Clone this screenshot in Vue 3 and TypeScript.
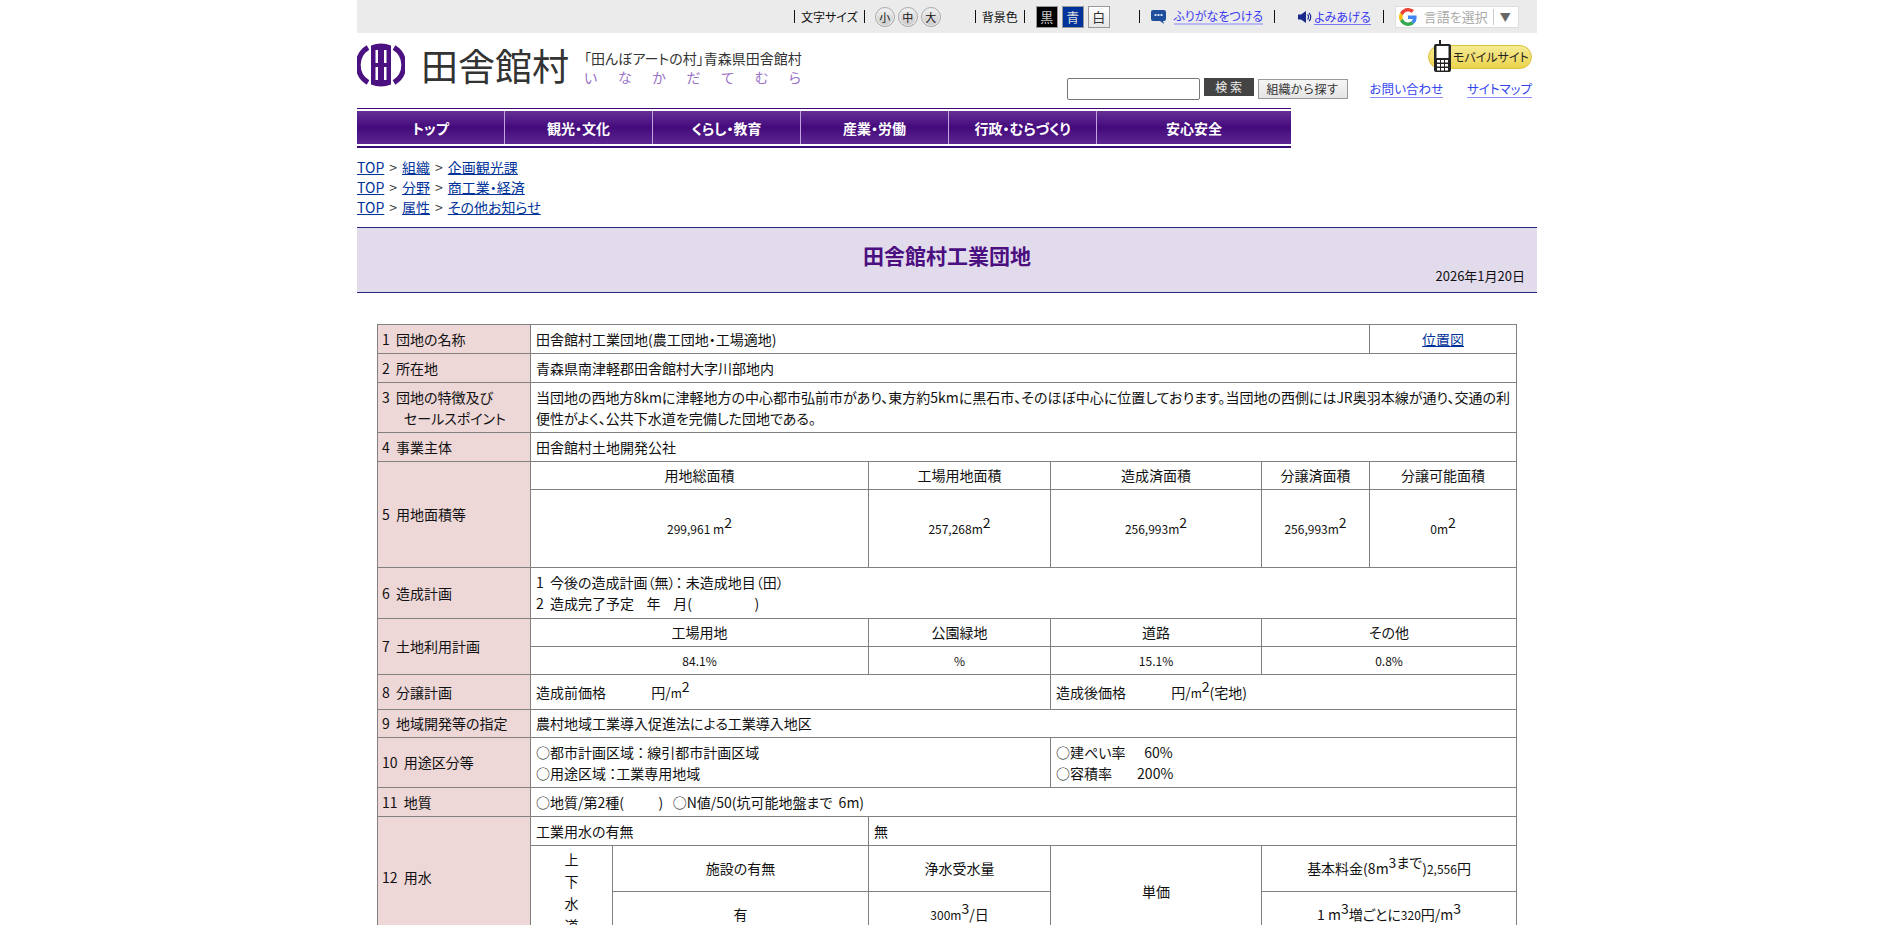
<script setup lang="ts">
const navItems = ["トップ", "観光・文化", "くらし・教育", "産業・労働", "行政・むらづくり", "安心安全"]

const crumbs = [
	["組織", "企画観光課"],
	["分野", "商工業・経済"],
	["属性", "その他お知らせ"],
]

const kana = ["い", "な", "か", "だ", "て", "む", "ら"]
</script>

<template>
	<div class="page">
		<!-- 上部バー -->
		<div class="topbar">
			<span class="sep"></span>
			<span class="bar-label">文字サイズ</span>
			<span class="sep"></span>
			<span class="round first">小</span>
			<span class="round">中</span>
			<span class="round">大</span>
			<span class="sep bg-sep"></span>
			<span class="bar-label">背景色</span>
			<span class="sep"></span>
			<span class="swatch black">黒</span>
			<span class="swatch blue">青</span>
			<span class="swatch white">白</span>
			<span class="sep wide"></span>
			<svg class="bubble" width="15" height="16" viewBox="0 0 15 16">
				<path d="M2 1h11a2 2 0 0 1 2 2v7a2 2 0 0 1-2 2h-1l1 3-4-3H2a2 2 0 0 1-2-2V3a2 2 0 0 1 2-2z" fill="#1f4f9c" />
				<rect x="3.5" y="5" width="2" height="2" fill="#cfe0f5" />
				<rect x="6.5" y="5" width="2" height="2" fill="#cfe0f5" />
				<rect x="9.5" y="5" width="2" height="2" fill="#cfe0f5" />
			</svg>
			<a class="bar-link furigana">ふりがなをつける</a>
			<span class="sep after-link"></span>
			<svg class="speaker" width="14" height="14" viewBox="0 0 14 14">
				<path d="M0 4.5h3L8 1v12L3 9.5H0z" fill="#1a2a8c" />
				<path d="M9.5 4.5a3.5 3.5 0 0 1 0 5M11 2.8a6 6 0 0 1 0 8.4" fill="none" stroke="#1a2a8c" stroke-width="1.2" />
			</svg>
			<a class="bar-link yomi">よみあげる</a>
			<span class="sep after-yomi"></span>
			<div class="translate">
				<svg width="18" height="18" viewBox="0 0 48 48">
					<path fill="#ea4335" d="M24 9.5c3.5 0 6.700 1.300 9.100 3.500l6.800-6.800C35.800 2.400 30.300 0 24 0 14.600 0 6.500 5.400 2.600 13.200l7.900 6.200C12.400 13.600 17.700 9.500 24 9.500z" />
					<path fill="#4285f4" d="M47 24.500c0-1.600-.2-3.100-.4-4.500H24v9h12.900c-.6 3-2.200 5.500-4.700 7.200l7.700 6C44.400 38 47 31.800 47 24.500z" />
					<path fill="#fbbc05" d="M10.500 28.600c-.5-1.400-.8-3-.8-4.600s.3-3.200.8-4.600l-7.900-6.200C1 16.500 0 20.100 0 24s1 7.500 2.600 10.800l7.900-6.200z" />
					<path fill="#34a853" d="M24 48c6.500 0 11.900-2.100 15.900-5.800l-7.700-6c-2.200 1.400-5 2.300-8.200 2.300-6.300 0-11.600-4.100-13.500-9.900l-7.900 6.200C6.500 42.600 14.600 48 24 48z" />
				</svg>
				<span class="translate-text">言語を選択</span>
				<span class="translate-line"></span>
				<span class="translate-arrow">▼</span>
			</div>
		</div>

		<!-- ヘッダー -->
		<header class="header">
			<div class="brand">
				<svg class="emblem" width="48" height="44" viewBox="0 0 48 44">
					<path d="M11 4.500A20.500 20.500 0 0 0 11 39.500" fill="none" stroke="#4b1181" stroke-width="5" />
					<path d="M37 4.500A20.500 20.500 0 0 1 37 39.500" fill="none" stroke="#4b1181" stroke-width="5" />
					<path d="M14 2.500Q24 -1.500 34 2.500V41.500Q24 45.500 14 41.500Z" fill="#4b1181" />
					<rect x="18.500" y="7" width="2.500" height="13" fill="#fff" />
					<rect x="27" y="7" width="2.500" height="13" fill="#fff" />
					<rect x="18.500" y="24" width="2.500" height="13" fill="#fff" />
					<rect x="27" y="24" width="2.500" height="13" fill="#fff" />
				</svg>
				<span class="brand-name">田舎館村</span>
				<div class="tagline">
					<div class="tag-main">「田んぼアートの村」青森県田舎館村</div>
					<div class="tag-kana">
						<span v-for="k in kana" :key="k">{{ k }}</span>
					</div>
				</div>
			</div>
			<div class="header-right">
				<div class="mobile">
					<svg class="phone" width="17" height="32" viewBox="0 0 17 32">
						<rect x="5" y="0" width="2" height="4" fill="#222" />
						<rect x="0" y="4" width="17" height="28" rx="2" fill="#222" />
						<rect x="2.500" y="6" width="12" height="12" fill="#fff" />
						<g fill="#fff">
							<rect x="3" y="20" width="3" height="2.500" /><rect x="7" y="20" width="3" height="2.500" /><rect x="11" y="20" width="3" height="2.500" />
							<rect x="3" y="24" width="3" height="2.500" /><rect x="7" y="24" width="3" height="2.500" /><rect x="11" y="24" width="3" height="2.500" />
							<rect x="3" y="28" width="3" height="2.500" /><rect x="7" y="28" width="3" height="2.500" /><rect x="11" y="28" width="3" height="2.500" />
						</g>
					</svg>
					<span>モバイルサイト</span>
				</div>
				<div class="search-row">
					<input class="search-input" type="text" />
					<button class="search-btn">検 索</button>
					<button class="org-btn">組織から探す</button>
					<a class="head-link contact">お問い合わせ</a>
					<a class="head-link sitemap">サイトマップ</a>
				</div>
			</div>
		</header>

		<!-- グローバルナビ -->
		<nav class="nav">
			<a v-for="item in navItems" :key="item" class="nav-item">{{ item }}</a>
		</nav>

		<!-- パンくず -->
		<div class="crumbs">
			<div v-for="c in crumbs" :key="c[0]" class="crumb">
				<a>TOP</a><span class="gt">&gt;</span><a>{{ c[0] }}</a><span class="gt">&gt;</span><a>{{ c[1] }}</a>
			</div>
		</div>

		<!-- タイトル -->
		<div class="title-band">
			<h1>田舎館村工業団地</h1>
			<p>2026年1月20日</p>
		</div>

		<!-- 工業団地の表 -->
		<table class="info">
			<colgroup>
				<col class="c1" /><col class="c2" /><col class="c3" /><col class="c4" /><col class="c5" /><col class="c6" /><col class="c7" />
			</colgroup>
			<tbody>
				<tr class="r29">
					<th>1&nbsp; 団地の名称</th>
					<td colspan="5">田舎館村工業団地(農工団地・工場適地)</td>
					<td class="ctr"><a class="link">位置図</a></td>
				</tr>
				<tr class="r29">
					<th>2&nbsp; 所在地</th>
					<td colspan="6">青森県南津軽郡田舎館村大字川部地内</td>
				</tr>
				<tr class="r50">
					<th>3&nbsp; 団地の特徴及び<br />&nbsp;&nbsp;&nbsp;&nbsp;&nbsp;&nbsp; セールスポイント</th>
					<td colspan="6">当団地の西地方8kmに津軽地方の中心都市弘前市があり、東方約5kmに黒石市、そのほぼ中心に位置しております。当団地の西側にはJR奥羽本線が通り、交通の利<br />便性がよく、公共下水道を完備した団地である。</td>
				</tr>
				<tr class="r29">
					<th>4&nbsp; 事業主体</th>
					<td colspan="6">田舎館村土地開発公社</td>
				</tr>
				<tr class="r28">
					<th rowspan="2">5&nbsp; 用地面積等</th>
					<td colspan="2" class="ctr">用地総面積</td>
					<td class="ctr">工場用地面積</td>
					<td class="ctr">造成済面積</td>
					<td class="ctr">分譲済面積</td>
					<td class="ctr">分譲可能面積</td>
				</tr>
				<tr class="r78">
					<td colspan="2" class="ctr"><span class="n">299,961 m</span><sup>2</sup></td>
					<td class="ctr"><span class="n">257,268m</span><sup>2</sup></td>
					<td class="ctr"><span class="n">256,993m</span><sup>2</sup></td>
					<td class="ctr"><span class="n">256,993m</span><sup>2</sup></td>
					<td class="ctr"><span class="n">0m</span><sup>2</sup></td>
				</tr>
				<tr class="r51">
					<th>6&nbsp; 造成計画</th>
					<td colspan="6">1&nbsp; 今後の造成計画（無）： 未造成地目（田）<br />2&nbsp; 造成完了予定 &nbsp; &nbsp;年 &nbsp; &nbsp;月( &nbsp; &nbsp; &nbsp; &nbsp; &nbsp; &nbsp; &nbsp; &nbsp; &nbsp; &nbsp;)</td>
				</tr>
				<tr class="r28">
					<th rowspan="2">7&nbsp; 土地利用計画</th>
					<td colspan="2" class="ctr">工場用地</td>
					<td class="ctr">公園緑地</td>
					<td class="ctr">道路</td>
					<td colspan="2" class="ctr">その他</td>
				</tr>
				<tr class="r28">
					<td colspan="2" class="ctr"><span class="n">84.1%</span></td>
					<td class="ctr"><span class="n">%</span></td>
					<td class="ctr"><span class="n">15.1%</span></td>
					<td colspan="2" class="ctr"><span class="n">0.8%</span></td>
				</tr>
				<tr class="r35">
					<th>8&nbsp; 分譲計画</th>
					<td colspan="3">造成前価格 <span class="gap-a"></span>円/<span class="n">m</span><sup>2</sup></td>
					<td colspan="3">造成後価格 <span class="gap-b"></span>円/<span class="n">m</span><sup>2</sup>(宅地)</td>
				</tr>
				<tr class="r28">
					<th>9&nbsp; 地域開発等の指定</th>
					<td colspan="6">農村地域工業導入促進法による工業導入地区</td>
				</tr>
				<tr class="r50">
					<th>10&nbsp; 用途区分等</th>
					<td colspan="3">○都市計画区域 ： 線引都市計画区域<br />○用途区域 ：工業専用地域</td>
					<td colspan="3">○建ぺい率 &nbsp; &nbsp; &nbsp;60%<br />○容積率 &nbsp; &nbsp; &nbsp; &nbsp;200%</td>
				</tr>
				<tr class="r29">
					<th>11&nbsp; 地質</th>
					<td colspan="6">○地質/第2種( &nbsp; &nbsp; &nbsp; &nbsp; &nbsp; ) &nbsp; ○N値/50(坑可能地盤まで &nbsp;6m)</td>
				</tr>
				<tr class="r29">
					<th rowspan="3">12&nbsp; 用水</th>
					<td colspan="2">工業用水の有無</td>
					<td colspan="4">無</td>
				</tr>
				<tr class="r46">
					<td rowspan="2" class="ctr tall">上<br />下<br />水<br />道</td>
					<td class="ctr">施設の有無</td>
					<td class="ctr">浄水受水量</td>
					<td rowspan="2" class="ctr">単価</td>
					<td colspan="2" class="ctr">基本料金(8m<sup>3まで</sup>)<span class="n">2,556</span>円</td>
				</tr>
				<tr class="r46">
					<td class="ctr">有</td>
					<td class="ctr"><span class="n">300m</span><sup>3</sup>/日</td>
					<td colspan="2" class="ctr">1 m<sup>3</sup>増ごとに<span class="n">320</span>円/m<sup>3</sup></td>
				</tr>
			</tbody>
		</table>
	</div>
</template>

<style>
html,
body {
	margin: 0;
	overflow: hidden;
	background: #fff;
}
</style>

<style scoped>
.page {
	width: 1180px;
	height: 925px;
	margin-left: 357px;
	overflow: hidden;
	font-family: "Noto Sans CJK JP", "Liberation Sans", sans-serif;
	font-size: 14px;
	font-feature-settings: "palt";
	color: #111;
}

/* 上部バー */
.topbar {
	display: flex;
	align-items: center;
	height: 33px;
	padding-left: 437px;
	background: #ebebeb;
	font-size: 12px;
}

.sep {
	width: 1px;
	height: 13px;
	background: #111;
}

.bar-label {
	margin: 0 6px;
	line-height: 14px;
	color: #111;
}

.round {
	width: 20px;
	height: 20px;
	margin-left: 3px;
	box-sizing: border-box;
	border: 1px solid #aaa;
	border-radius: 50%;
	background: linear-gradient(#f2f2f2, #c9c9c9);
	box-shadow: inset 0 0 0 1px #eee;
	font-size: 11px;
	line-height: 18px;
	text-align: center;
}

.round.first {
	margin-left: 10px;
}

.bg-sep {
	margin-left: 34px;
}

.swatch {
	width: 22px;
	height: 22px;
	margin-left: 4px;
	box-sizing: border-box;
	border: 1px solid #999;
	font-size: 13px;
	line-height: 20px;
	text-align: center;
}

.bar-label + .sep + .swatch {
	margin-left: 11px;
}

.swatch.black {
	background: #000;
	color: #ccc;
}

.swatch.blue {
	background: #003399;
	color: #ddd;
}

.swatch.white {
	background: linear-gradient(#fff, #e6e6e6);
	color: #333;
}

.sep.wide {
	margin-left: 29px;
}

.bubble {
	margin-left: 11px;
}

.bar-link {
	line-height: 15px;
	color: #3a3af0;
}

.furigana {
	margin-left: 8px;
	border-bottom: 2px solid #b9b9f5;
}

.after-link {
	margin-left: 11px;
}

.speaker {
	margin-left: 23px;
}

.yomi {
	margin-left: 2px;
	border-bottom: 1px solid #7878f0;
}

.after-yomi {
	margin-left: 12px;
}

.translate {
	display: flex;
	align-items: center;
	width: 124px;
	height: 22px;
	margin-left: 11px;
	padding-left: 3px;
	box-sizing: border-box;
	border: 1px solid #ddd;
	background: #fff;
}

.translate-text {
	margin-left: 7px;
	font-size: 13px;
	color: #aaa;
}

.translate-line {
	width: 1px;
	height: 16px;
	margin-left: 5px;
	background: #ccc;
}

.translate-arrow {
	margin-left: 6px;
	font-size: 11px;
	color: #666;
}

/* ヘッダー */
.header {
	display: flex;
	justify-content: space-between;
	height: 75px;
}

.brand {
	display: flex;
	align-items: flex-start;
	padding-top: 10px;
}

.emblem {
	flex: none;
}

.brand-name {
	margin-left: 16px;
	font-size: 37px;
	line-height: 44px;
	color: #333;
}

.tagline {
	width: 217px;
	margin-left: 15px;
	padding-top: 6px;
}

.tag-main {
	font-size: 14px;
	line-height: 18px;
	white-space: nowrap;
	color: #333;
}

.tag-kana {
	display: flex;
	justify-content: space-between;
	font-size: 14px;
	line-height: 20px;
	color: #9a72c6;
}

.header-right {
	display: flex;
	flex-direction: column;
	align-items: flex-end;
	padding-right: 5px;
}

.mobile {
	position: relative;
	width: 104px;
	height: 24px;
	margin-top: 12px;
	padding-left: 24px;
	box-sizing: border-box;
	border: 1px solid #dcc33c;
	border-radius: 12px;
	background: linear-gradient(#f6eb94, #ecd34e);
	font-size: 12px;
	line-height: 22px;
	white-space: nowrap;
	color: #222;
}

.phone {
	position: absolute;
	left: 5px;
	top: -6px;
}

.search-row {
	display: flex;
	align-items: flex-start;
	margin-top: 9px;
}

.search-input {
	width: 133px;
	height: 22px;
	margin: 0;
	padding: 0;
	box-sizing: border-box;
	border: 1px solid #777;
	border-radius: 2px;
}

.search-btn {
	width: 50px;
	height: 18px;
	margin-left: 4px;
	padding: 0;
	border: 0;
	background: #444;
	font: 12px/18px "Noto Sans CJK JP", sans-serif;
	color: #eee;
}

.org-btn {
	width: 90px;
	height: 20px;
	margin: 1px 0 0 4px;
	padding: 0;
	border: 1px solid #999;
	background: linear-gradient(#f6f6f6, #e4e4e4);
	font: 12px/18px "Noto Sans CJK JP", sans-serif;
	color: #333;
}

.head-link {
	margin-top: 3px;
	font-size: 12.500px;
	line-height: 16px;
	color: #3344ee;
	border-bottom: 1px solid #8c8cf2;
}

.contact {
	margin-left: 22px;
}

.sitemap {
	margin-left: 24px;
}

/* ナビ */
.nav {
	display: flex;
	width: 934px;
	height: 40px;
	padding: 2px 0 2px;
	box-sizing: border-box;
	border-top: 1px solid #3d0a75;
	border-bottom: 2px solid #3d0a75;
	background-clip: padding-box;
}

.nav-item {
	flex: 0 0 148px;
	box-sizing: border-box;
	border-right: 1px solid #c3a5de;
	background: linear-gradient(#652f96, #440a7c 50%, #5c2691);
	font-weight: 700;
	font-size: 14px;
	line-height: 35px;
	text-align: center;
	color: #fff;
}

.nav-item:last-child {
	flex: 0 0 194px;
	border-right: 0;
}

/* パンくず */
.crumbs {
	padding-top: 9px;
	line-height: 20px;
}

.crumb a {
	color: #003399;
	text-decoration: underline;
}

.gt {
	margin: 0 5px;
	color: #333;
}

/* タイトル */
.title-band {
	height: 66px;
	margin-top: 10px;
	box-sizing: border-box;
	border-top: 1px solid #1f2a80;
	border-bottom: 1px solid #1f2a80;
	background: #e2dbec;
}

.title-band h1 {
	margin: 0;
	padding-top: 15px;
	font-size: 21px;
	font-weight: 700;
	line-height: 25px;
	text-align: center;
	color: #4b0f7f;
}

.title-band p {
	margin: 0;
	padding-right: 12px;
	font-size: 13px;
	line-height: 16px;
	text-align: right;
}

/* 表 */
.info {
	width: 1139px;
	margin: 31px 0 0 20px;
	border-collapse: collapse;
	table-layout: fixed;
	line-height: 21px;
}

.c1 { width: 153px; }
.c2 { width: 82px; }
.c3 { width: 256px; }
.c4 { width: 182px; }
.c5 { width: 211px; }
.c6 { width: 108px; }
.c7 { width: 147px; }

.info th,
.info td {
	padding: 0 5px;
	border: 1px solid #808080;
	font-weight: 400;
	text-align: left;
}

.info th {
	padding-left: 4px;
	background: #edd7d7;
}

.info td.ctr {
	text-align: center;
}

.r28 { height: 28px; }
.r29 { height: 29px; }
.r35 { height: 35px; }
.r46 { height: 46px; }
.r50 { height: 50px; }
.r51 { height: 51px; }
.r78 { height: 78px; }

.tall {
	line-height: 22px;
}

.n {
	font-size: 12px;
}

sup {
	font-size: 14px;
	line-height: 0;
}

.gap-a {
	display: inline-block;
	width: 42px;
}

.gap-b {
	display: inline-block;
	width: 42px;
}

.link {
	color: #003399;
	text-decoration: underline;
}
</style>
